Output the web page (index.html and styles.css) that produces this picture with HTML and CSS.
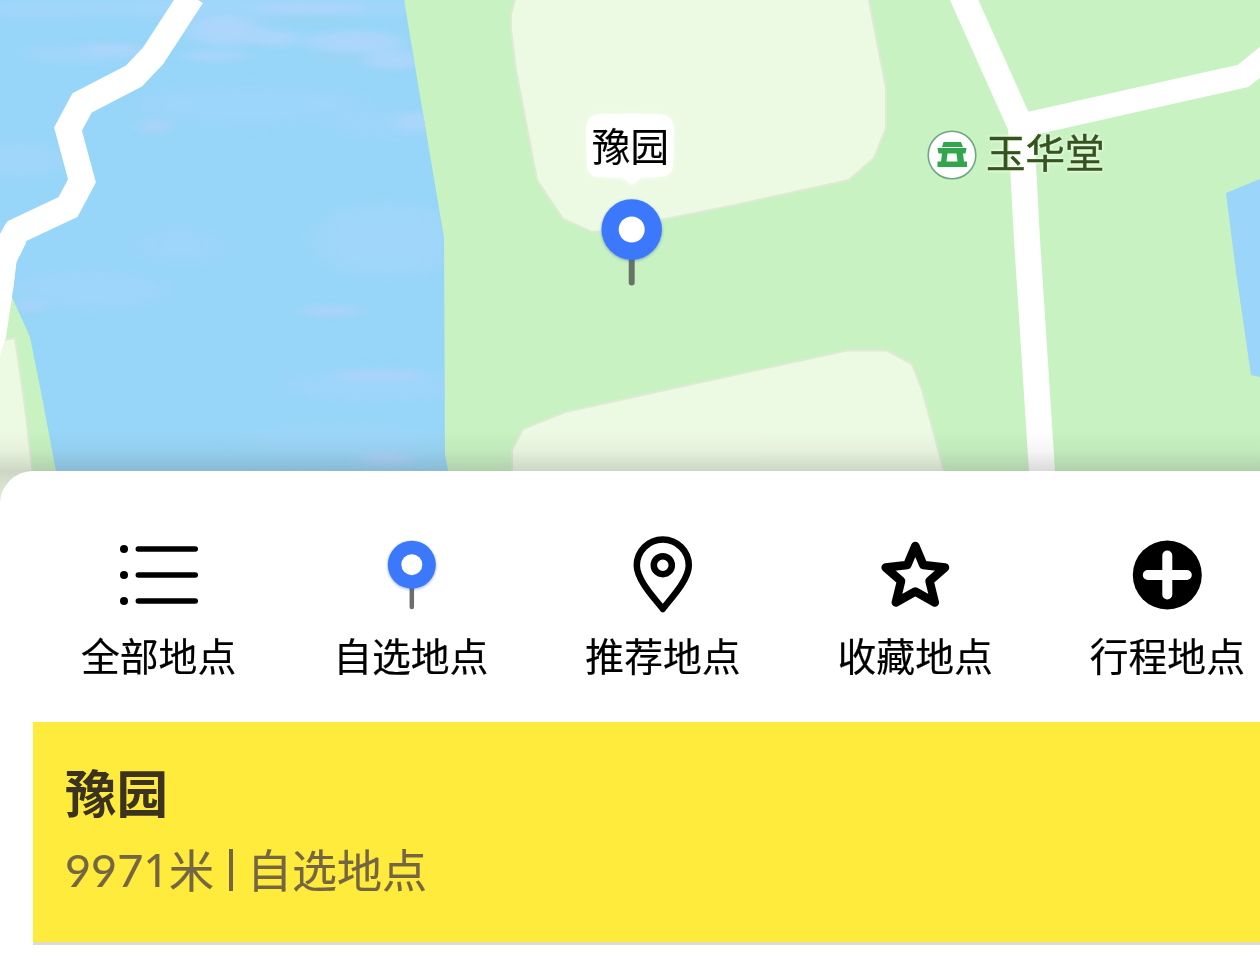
FILE: index.html
```html
<!DOCTYPE html>
<html lang="zh-CN">
<head>
<meta charset="utf-8">
<title>豫园</title>
<link rel="stylesheet" href="styles.css">
</head>
<body>
<main class="screen">
  <section class="map">
    <svg class="map-canvas" viewBox="0 0 1260 510" width="1260" height="510">
      <defs>
        <filter id="soft" x="-30%" y="-30%" width="160%" height="160%"><feGaussianBlur stdDeviation="13 5"/></filter>
        <filter id="streak" x="-30%" y="-30%" width="160%" height="160%"><feGaussianBlur stdDeviation="9 3"/></filter>
        <clipPath id="lake"><path d="M0 0H404L416 72 444 238 445 455 449 475V510H63L56 471 41 392 30 337 12 297 0 300Z"/></clipPath>
      </defs>
      <rect width="1260" height="510" fill="#c8f2c2"/>
      <g clip-path="url(#lake)">
        <rect width="460" height="510" fill="#97d6f8"/>
        <g filter="url(#soft)" fill="#a2d6fb">
          <ellipse cx="250" cy="8" rx="200" ry="10"/>
          <ellipse cx="40" cy="10" rx="60" ry="9"/>
          <ellipse cx="90" cy="54" rx="70" ry="8"/>
          <ellipse cx="390" cy="125" rx="60" ry="15" opacity=".6"/>
          <ellipse cx="250" cy="105" rx="120" ry="22" opacity=".5"/>
          <ellipse cx="20" cy="160" rx="50" ry="18" opacity=".7"/>
          <ellipse cx="385" cy="240" rx="75" ry="38" opacity=".7"/>
          <ellipse cx="180" cy="245" rx="50" ry="20" opacity=".5"/>
          <ellipse cx="90" cy="290" rx="80" ry="20" opacity=".6"/>
          <ellipse cx="380" cy="385" rx="100" ry="17" opacity=".6"/>
          <ellipse cx="340" cy="440" rx="100" ry="16" opacity=".4"/>
        </g>
        <g filter="url(#streak)">
          <g fill="#acd6fc">
            <ellipse cx="225" cy="30" rx="38" ry="15"/>
            <ellipse cx="275" cy="38" rx="25" ry="8"/>
            <ellipse cx="355" cy="42" rx="48" ry="11"/>
            <ellipse cx="395" cy="60" rx="32" ry="9"/>
            <ellipse cx="310" cy="8" rx="55" ry="5"/>
            <ellipse cx="110" cy="50" rx="30" ry="5"/>
            <ellipse cx="215" cy="56" rx="35" ry="4"/>
            <ellipse cx="415" cy="122" rx="20" ry="9"/>
          </g>
          <g fill="#9ad3f2">
            <ellipse cx="340" cy="57" rx="30" ry="4"/>
            <ellipse cx="310" cy="20" rx="50" ry="3"/>
          </g>
          <g fill="#acd3fa">
            <ellipse cx="155" cy="126" rx="16" ry="7"/>
            <ellipse cx="331" cy="311" rx="32" ry="5"/>
            <ellipse cx="379" cy="376" rx="46" ry="5"/>
            <ellipse cx="388" cy="459" rx="26" ry="6"/>
            <ellipse cx="28" cy="306" rx="15" ry="5"/>
          </g>
        </g>
      </g>
      <path d="M1226 193L1260 179V377L1251 375 1236 272Z" fill="#9bd5fa"/>
      <path d="M0 234L6 223 26 243 16 263 12 297 6 337 0 355Z" fill="#fff"/>
      <g fill="#edfae3" stroke="#dcebd2" stroke-width="2">
        <path d="M-4 341L15 338 24 400 33 475 37 515H-4Z"/>
        <path d="M516 -4L511 14 511 30 516 70 537 180 563 219 592 232 606 231 735 205 849 180 874 158 886 128V88L868 -4Z"/>
        <path d="M512 515V450L523 429 565 412 847 350.5H887L912 364 922 390 944 471 953 515Z"/>
      </g>
      <path d="M0 338L6 337 0 355Z" fill="#fff"/>
      <g fill="none" stroke="#fff" stroke-linejoin="miter">
        <path d="M192 -4L153 56 134 76 82 103 68 129 82 181 68 207 17 231 4 257 0 290" stroke-width="26"/>
        <path d="M961 -7L1021 127 1027 240 1042 471 1045 515" stroke-width="26"/>
        <path d="M1015 127L1243 76 1270 54" stroke-width="24"/>
      </g>
      <path class="bubble" d="M599 114.500Q632 113 660 114.500 673 115 674 128L673 166Q672 176 660 177L641 178 632 185 622 178 599 177Q588 177 587 165L586 128Q587 115 599 114.500Z"/>
      <g>
        <path d="M631.7 256V282.500" stroke="#697467" stroke-width="6" stroke-linecap="round"/>
        <circle class="pin-head" cx="631.7" cy="229.500" r="30.200"/>
        <circle cx="631.7" cy="229.500" r="13" fill="#fff"/>
      </g>
      <circle cx="952" cy="155" r="23.800" fill="#fff" stroke="#72a583" stroke-width="1.600"/>
      <path d="M943.500 142H961L963 147H942ZM937.500 148H966.500L965.500 153.500H963L964 161.500H967V167H937.500V161.500H941L942 153.500H938.500ZM947.500 153.500L946.500 161.500H957.500L956.500 153.500Z" fill="#32a64c" fill-rule="evenodd"/>
    </svg>
    <span class="callout">豫园</span>
    <span class="poi">玉华堂</span>
    <div class="fade"></div>
  </section>

  <section class="sheet">
    <nav class="tabs">
      <a class="tab">
        <svg class="icon" viewBox="0 0 80 80">
          <g><circle cx="6" cy="15" r="4"/><circle cx="6" cy="41" r="4"/><circle cx="6" cy="67" r="4"/></g>
          <path d="M20.300 15H77.300M20.300 41H77.300M20.300 67H77.300" stroke="#000" stroke-width="5.500" stroke-linecap="round"/>
        </svg>
        <span>全部地点</span>
      </a>
      <a class="tab">
        <svg class="icon" viewBox="0 0 80 80">
          <path d="M41.800 52V73" stroke="#6d6e6c" stroke-width="4.500" stroke-linecap="round"/>
          <circle class="pin-head" cx="41.800" cy="30.700" r="24"/>
          <circle cx="41.800" cy="30.700" r="10.500" fill="#fff"/>
        </svg>
        <span>自选地点</span>
      </a>
      <a class="tab">
        <svg class="icon outline" viewBox="0 0 80 80">
          <path d="M40.800 75C36 68 14.800 47 14.800 31.500A26 26 0 0 1 66.800 31.500C66.800 47 45.500 68 40.800 75Z"/>
          <circle cx="40.800" cy="31.200" r="9"/>
        </svg>
        <span>推荐地点</span>
      </a>
      <a class="tab">
        <svg class="icon outline" viewBox="0 0 80 80">
          <path class="star" d="M40.300 12L48.300 31 70 33.500 54.500 47 59.800 68.500 40.300 57.500 20.800 68.500 26.100 47 10.600 33.500 32.300 31Z"/>
        </svg>
        <span>收藏地点</span>
      </a>
      <a class="tab">
        <svg class="icon" viewBox="0 0 80 80">
          <circle cx="40.300" cy="41" r="34.500"/>
          <path d="M40.300 21.500V60.500M20.800 41H59.800" stroke="#fff" stroke-width="10" stroke-linecap="round"/>
        </svg>
        <span>行程地点</span>
      </a>
    </nav>
    <article class="place">
      <h1 class="place-name">豫园</h1>
      <p class="place-meta"><span class="distance">997<span class="one">1</span></span><span>米</span><i class="divider"></i><span>自选地点</span></p>
    </article>
  </section>
</main>
</body>
</html>
```
FILE: styles.css
```css
* { box-sizing: border-box; }

body {
  margin: 0;
  background: #fff;
  font-family: "Noto Sans CJK SC", sans-serif;
}

.screen {
  width: 1260px;
  height: 972px;
  overflow: hidden;
  display: flex;
  flex-direction: column;
}

.map {
  position: relative;
  flex: none;
  height: 510px;
}

.map-canvas { display: block; }

.bubble {
  fill: #fff;
  filter: drop-shadow(0 0 2px rgba(255, 255, 255, .6));
}

.pin-head {
  fill: #3c78fc;
  filter: drop-shadow(0 1px 1.5px rgba(50, 90, 180, .5));
}

.callout,
.poi {
  position: absolute;
  white-space: nowrap;
  line-height: 50px;
}

.callout {
  left: 592px;
  top: 119px;
  font-size: 38.500px;
  color: #000;
  -webkit-text-stroke: .2px #000;
}

.poi {
  left: 986px;
  top: 126px;
  font-size: 39.500px;
  color: #34531f;
  -webkit-text-stroke: .5px #34531f;
  text-shadow: 0 0 2px #f3fbea, 0 0 3px #f3fbea, 0 0 4px #f3fbea;
}

.fade {
  position: absolute;
  inset: 431px 0 0;
  background: linear-gradient(rgba(90, 90, 90, 0), rgba(90, 90, 90, .06) 20px, rgba(100, 100, 100, .24) 40px, rgba(100, 100, 100, .08) 70px);
}

.sheet {
  position: relative;
  flex: 1;
  margin-top: -39px;
  padding: 63px 0 0 32px;
  border-top-left-radius: 33px;
  background: #fff;
}

.tabs {
  display: flex;
  width: 1261px;
  height: 188px;
}

.tab {
  flex: none;
  width: 252.200px;
  display: flex;
  flex-direction: column;
  align-items: center;
  gap: 15px;
  color: #000;
  font-size: 38.800px;
  line-height: 50px;
  -webkit-text-stroke: .2px #000;
}

.tab span {
  padding-left: 1px;
}

.icon {
  width: 80px;
  height: 80px;
}

.outline {
  fill: none;
  stroke: #000;
  stroke-width: 6.500;
  stroke-linejoin: round;
}

.star { stroke-width: 8.500; }

.place {
  height: 223px;
  margin-left: 1px;
  padding: 36px 33px 0 32px;
  background: #ffeb3c;
  border-bottom: 3px solid #dfdbcf;
}

.place-name {
  margin: 0;
  color: #3b331f;
  font-size: 51.500px;
  line-height: 66px;
  font-weight: 700;
}

.place-meta {
  display: flex;
  align-items: center;
  margin: 11px 0 0;
  color: #746543;
  font-size: 45px;
  line-height: 66px;
  -webkit-text-stroke: .2px #746543;
}

.distance {
  padding-top: 2px;
  font-family: Lato, sans-serif;
  font-size: 45px;
}

.one { font-family: "Noto Sans", sans-serif; }

.divider {
  width: 4px;
  height: 42px;
  margin: 2px 14px 0 15px;
  background: #746543;
}
```
